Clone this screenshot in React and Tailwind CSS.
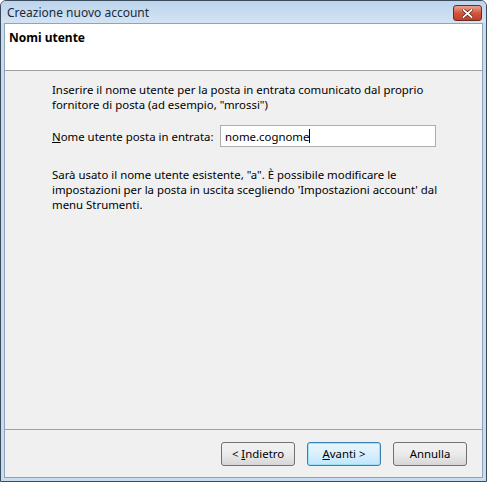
export default function App() {
  return (
    <div
      className="w-[487px] h-[482px] flex flex-col bg-[#c7dcf1] border border-[#3b4b5c] rounded-t-[6px] overflow-hidden text-[11.4px] text-black"
      style={{ fontFamily: '"Noto Sans", "Open Sans", sans-serif' }}
    >
      {/* title bar */}
      <div className="h-[22px] flex items-center justify-between pl-[6px] pr-[4px] pt-[2px] bg-gradient-to-b from-[#bcd4ec] to-[#d3e3f3]">
        <span className="text-[12px] leading-none text-[#1c2a3a]">Creazione nuovo account</span>
        <div className="w-[29px] h-[16px] rounded-[3px] border border-[#6b2b20] bg-gradient-to-b from-[#e8a391] via-[#d3553b] to-[#c0402a] flex items-center justify-center">
          <svg width="11" height="9" viewBox="0 0 11 9">
            <path d="M1.5 1 L9.5 8 M9.5 1 L1.5 8" stroke="#5a1a10" strokeWidth="3.2" strokeLinecap="square" />
            <path d="M1.5 1 L9.5 8 M9.5 1 L1.5 8" stroke="#ffffff" strokeWidth="1.8" strokeLinecap="square" />
          </svg>
        </div>
      </div>

      {/* client area */}
      <div className="flex-1 flex flex-col mx-[3px] mb-[3px] bg-[#f0f0f0] border border-[#8ea4bb]">
        <div className="h-[47px] bg-white border-b border-[#a0a0a0] px-[4px] pt-[5px]">
          <div className="font-bold text-[12px]">Nomi utente</div>
        </div>

        <div className="flex-1 pl-[47px] pr-[30px] pt-[11px] leading-[15px]">
          <p>
            Inserire il nome utente per la posta in entrata comunicato dal proprio fornitore di posta (ad esempio, "mrossi")
          </p>
          <div className="flex items-center mt-[13px]">
            <span className="w-[168px] whitespace-nowrap">
              <span className="underline">N</span>ome utente posta in entrata:
            </span>
            <div className="w-[216px] h-[22px] bg-white border border-[#abadb3] flex items-center px-[4px]">
              nome.cognome<span className="w-px h-[14px] bg-black" />
            </div>
          </div>
          <p className="mt-[20px] pr-[8px]">
            Sarà usato il nome utente esistente, "a". È possibile modificare le impostazioni per la posta in uscita scegliendo 'Impostazioni account' dal menu Strumenti.
          </p>
        </div>

        <div className="h-[48px] border-t border-[#a0a0a0] flex items-start justify-end gap-[12px] pr-[15px] pt-[12px]">
          <button className="w-[74px] h-[24px] rounded-[3px] border border-[#707070] bg-gradient-to-b from-[#f2f2f2] via-[#ebebeb] to-[#d6d6d6]">
            &lt; <span className="underline">I</span>ndietro
          </button>
          <button className="w-[74px] h-[24px] rounded-[3px] border border-[#3c7fb1] shadow-[inset_0_0_0_1px_#9ee0f7] bg-gradient-to-b from-[#eaf6fd] via-[#d9f0fc] to-[#bee6fd]">
            <span className="underline">A</span>vanti &gt;
          </button>
          <button className="w-[74px] h-[24px] rounded-[3px] border border-[#707070] bg-gradient-to-b from-[#f2f2f2] via-[#ebebeb] to-[#d6d6d6]">
            Annulla
          </button>
        </div>
      </div>
    </div>
  );
}
